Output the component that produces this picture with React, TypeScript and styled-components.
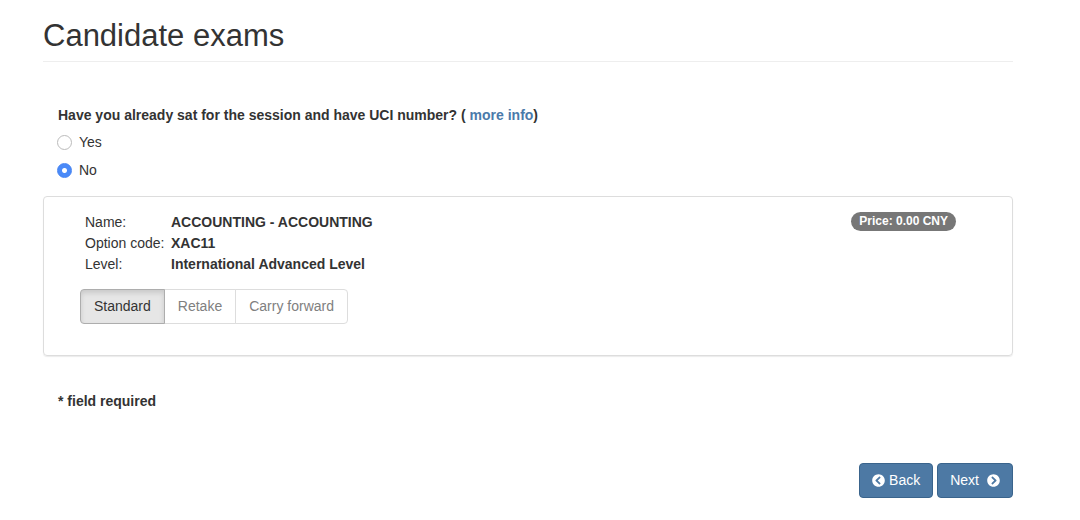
import { useState } from 'react';
import styled, { createGlobalStyle, css } from 'styled-components';
import { FaChevronCircleLeft, FaChevronCircleRight } from 'react-icons/fa';

const GlobalStyle = createGlobalStyle`
  *, *::before, *::after { box-sizing: border-box; }
  body {
    margin: 0;
    background: #fff;
    color: #333;
    font-family: "Liberation Sans", Arial, sans-serif;
    font-size: 14px;
    line-height: 21px;
  }
`;

const Page = styled.main`
  padding: 17px 67px 20px 43px;
`;

const Title = styled.h1`
  margin: 0 0 43px;
  padding-bottom: 7px;
  border-bottom: 1px solid #eee;
  font-size: 31px;
  font-weight: 400;
  line-height: 37px;
`;

const Question = styled.fieldset`
  margin: 0 0 15px;
  padding: 0 15px;
  border: 0;
  min-width: 0;
`;

const Legend = styled.legend`
  padding: 0;
  margin-bottom: 6px;
  font-weight: 700;
`;

const Link = styled.a`
  color: #4a7aaa;
  text-decoration: none;
`;

const RadioLabel = styled.label`
  display: flex;
  align-items: center;
  gap: 7px;
  width: max-content;
  line-height: 21px;

  & + & { margin-top: 7px; }
`;

const Radio = styled.input`
  appearance: none;
  width: 15px;
  height: 15px;
  margin: 0 0 0 -1px;
  border: 1px solid #bbb;
  border-radius: 50%;
  background: #fff;

  &:checked {
    border-color: #4583f2;
    background: radial-gradient(circle, #fff 0 2px, #4a8af8 3px);
  }
`;

const Card = styled.section`
  display: flex;
  justify-content: space-between;
  align-items: flex-start;
  margin-bottom: 35px;
  padding: 15px 56px 31px 36px;
  border: 1px solid #ddd;
  border-radius: 4px;
  box-shadow: 0 1px 1px rgba(0, 0, 0, 0.08);
`;

const Details = styled.table`
  margin: 0 0 14px 5px;
  border-collapse: collapse;

  th, td {
    padding: 0;
    text-align: left;
    line-height: 21px;
  }
  th { width: 86px; font-weight: 400; }
  td { font-weight: 700; }
`;

const Badge = styled.span`
  padding: 0 8px;
  border-radius: 10px;
  background: #777;
  color: #fff;
  font-size: 12px;
  font-weight: 700;
  line-height: 19px;
`;

const ButtonGroup = styled.div`
  display: flex;
`;

const GroupButton = styled.button<{ $active: boolean }>`
  padding: 6px 13px;
  border: 1px solid #ddd;
  background: #fff;
  color: #808080;
  font: inherit;
  line-height: 21px;

  & + & { margin-left: -1px; }
  &:first-child { border-radius: 4px 0 0 4px; }
  &:last-child { border-radius: 0 4px 4px 0; }

  ${({ $active }) => $active && css`
    position: relative;
    border-color: #adadad;
    background: #e6e6e6;
    color: #333;
    box-shadow: inset 0 3px 5px rgba(0, 0, 0, 0.125);
  `}
`;

const Note = styled.p`
  margin: 0 15px 51px;
  font-weight: 700;
`;

const Actions = styled.nav`
  display: flex;
  justify-content: flex-end;
  gap: 4px;
`;

const ActionButton = styled.button<{ $gap: number }>`
  display: flex;
  align-items: center;
  gap: ${({ $gap }) => $gap}px;
  padding: 6px 12px;
  border: 1px solid #3a648c;
  border-radius: 4px;
  background: #4d79a4;
  color: #fff;
  font: inherit;
  line-height: 21px;

  svg { width: 13px; height: 13px; }
`;

const entryTypes = ['Standard', 'Retake', 'Carry forward'];

const details = [
  ['Name:', 'ACCOUNTING - ACCOUNTING'],
  ['Option code:', 'XAC11'],
  ['Level:', 'International Advanced Level'],
];

export default function App() {
  const [hasUci, setHasUci] = useState(false);
  const [entryType, setEntryType] = useState('Standard');

  return (
    <>
      <GlobalStyle />
      <Page>
        <Title>Candidate exams</Title>
        <Question>
          <Legend>
            Have you already sat for the session and have UCI number? ( <Link href="#more-info">more info</Link>)
          </Legend>
          <RadioLabel>
            <Radio type="radio" name="uci" checked={hasUci} onChange={() => setHasUci(true)} />
            Yes
          </RadioLabel>
          <RadioLabel>
            <Radio type="radio" name="uci" checked={!hasUci} onChange={() => setHasUci(false)} />
            No
          </RadioLabel>
        </Question>
        <Card>
          <div>
            <Details>
              <tbody>
                {details.map(([label, value]) => (
                  <tr key={label}>
                    <th scope="row">{label}</th>
                    <td>{value}</td>
                  </tr>
                ))}
              </tbody>
            </Details>
            <ButtonGroup role="group" aria-label="Entry type">
              {entryTypes.map((type) => (
                <GroupButton
                  key={type}
                  type="button"
                  $active={type === entryType}
                  aria-pressed={type === entryType}
                  onClick={() => setEntryType(type)}
                >
                  {type}
                </GroupButton>
              ))}
            </ButtonGroup>
          </div>
          <Badge>Price: 0.00 CNY</Badge>
        </Card>
        <Note>* field required</Note>
        <Actions aria-label="Form steps">
          <ActionButton type="button" $gap={4}>
            <FaChevronCircleLeft aria-hidden />
            Back
          </ActionButton>
          <ActionButton type="button" $gap={8}>
            Next
            <FaChevronCircleRight aria-hidden />
          </ActionButton>
        </Actions>
      </Page>
    </>
  );
}
